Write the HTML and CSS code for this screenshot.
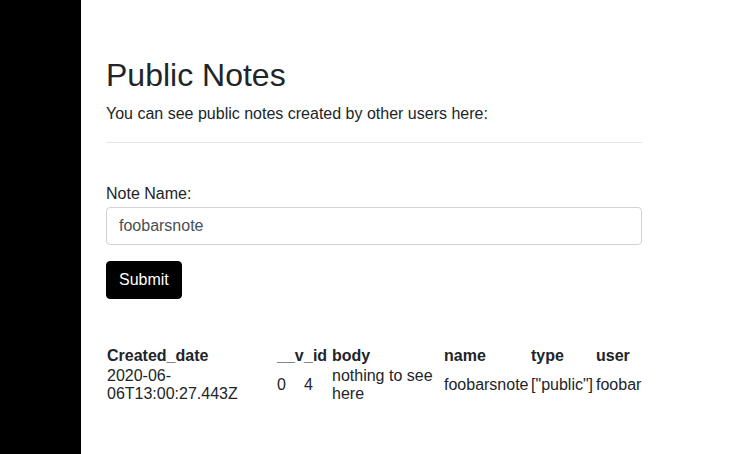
FILE: index.html
```html
<!DOCTYPE html>
<html lang="en">
<head>
<meta charset="utf-8">
<title>Public Notes</title>
<link rel="stylesheet" href="styles.css">
</head>
<body>
<div class="layout">
  <aside class="sidebar"></aside>
  <main class="content">
    <h1 class="title">Public Notes</h1>
    <p class="lead-text">You can see public notes created by other users here:</p>
    <hr class="divider">
    <form class="note-form">
      <div class="form-group">
        <label class="form-label" for="noteName">Note Name:</label>
        <input class="form-control" id="noteName" type="text" value="foobarsnote">
      </div>
      <button class="btn" type="button">Submit</button>
    </form>
    <table class="notes-table">
      <colgroup>
        <col class="col-date">
        <col class="col-v">
        <col class="col-id">
        <col class="col-body">
        <col class="col-name">
        <col class="col-type">
        <col class="col-user">
      </colgroup>
      <thead>
        <tr><th>Created_date</th><th>__v</th><th>_id</th><th>body</th><th>name</th><th>type</th><th>user</th></tr>
      </thead>
      <tbody>
        <tr><td>2020-06-06T13:00:27.443Z</td><td>0</td><td>4</td><td>nothing to see here</td><td>foobarsnote</td><td>["public"]</td><td>foobar</td></tr>
      </tbody>
    </table>
  </main>
</div>
</body>
</html>
```

FILE: styles.css
```css
* { box-sizing: border-box; }
html, body { margin: 0; padding: 0; }
body {
  font-family: "Liberation Sans", Arial, sans-serif;
  font-size: 16px;
  line-height: 1.5;
  color: #212529;
  background: #fff;
}
.layout {
  display: flex;
  min-height: 100vh;
}
.sidebar {
  width: 81px;
  flex: 0 0 81px;
  background: #000;
}
.content {
  width: 561px;
  padding: 56px 0 0 25px;
}
.title {
  margin: 0 0 8px;
  font-size: 32px;
  font-weight: 400;
  line-height: 1.2;
}
.lead-text {
  margin: 0 0 16px;
}
.divider {
  margin: 0;
  border: 0;
  border-top: 1px solid rgba(0,0,0,.1);
  height: 0;
}
.note-form {
  padding-top: 39px;
}
.form-group {
  margin-bottom: 16px;
}
.form-label {
  display: block;
  margin-bottom: 1px;
}
.form-control {
  display: block;
  width: 100%;
  height: 38px;
  padding: 6px 12px;
  font-family: inherit;
  font-size: 16px;
  line-height: 1.5;
  color: #495057;
  background: #fff;
  border: 1px solid #ced4da;
  border-radius: 4px;
  margin: 0;
}
.btn {
  display: inline-block;
  height: 38px;
  padding: 6px 12px;
  font-family: inherit;
  font-size: 16px;
  line-height: 1.5;
  color: #fff;
  background: #000;
  border: 1px solid #000;
  border-radius: 4px;
  margin: 0;
  vertical-align: top;
}
.notes-table {
  margin-top: 47px;
  width: 536px;
  table-layout: fixed;
  border-collapse: collapse;
  line-height: normal;
}
.col-date { width: 170px; }
.col-v { width: 27px; }
.col-id { width: 28px; }
.col-body { width: 112px; }
.col-name { width: 87px; }
.col-type { width: 65px; }
.col-user { width: 47px; }
.notes-table th,
.notes-table td {
  padding: 1px;
  text-align: left;
  vertical-align: middle;
}
.notes-table th {
  font-weight: 700;
}
```
